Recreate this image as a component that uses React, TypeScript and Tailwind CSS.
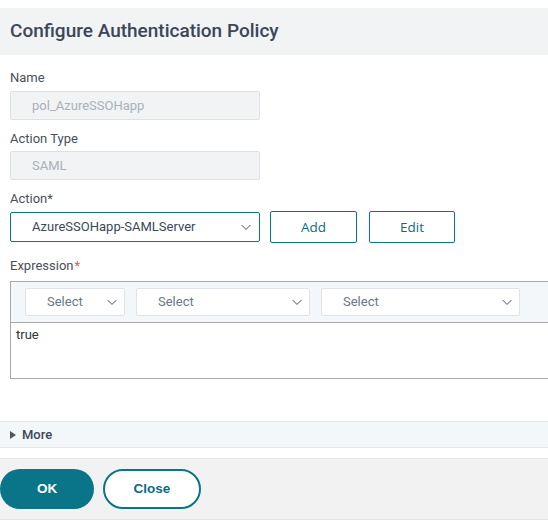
import React from 'react';

const Chevron = ({ className = '' }: { className?: string }) => (
  <svg viewBox="0 0 12 8" className={`h-[7px] w-[12px] ${className}`} fill="none" stroke="#3d4656" strokeWidth="1.1">
    <path d="M1 1.2 L6 6.2 L11 1.2" />
  </svg>
);

const Label = ({ text, req }: { text: string; req?: 'plain' | 'red' }) => (
  <div className="h-[13px] text-[13px] leading-[13px] text-[#4a4f57]">
    {text}
    {req === 'plain' && <span>*</span>}
    {req === 'red' && <span className="ml-[1px] text-[#e05a4f]">*</span>}
  </div>
);

const ExprSelect = ({ w }: { w: string }) => (
  <div className={`${w} flex h-[28px] items-center justify-between rounded-[2px] border border-[#dfe3e8] bg-white pl-[21px] pr-[6px]`}>
    <span className="text-[13px] text-[#6b7785]">Select</span>
    <Chevron />
  </div>
);

export default function App() {
  return (
    <div className="h-[522px] w-[548px] overflow-hidden bg-white" style={{ fontFamily: 'Roboto, "Noto Sans", sans-serif' }}>
      <div className="pt-[8px]">
        <div className="flex h-[47px] items-center bg-[#f2f3f5] pl-[10px]">
          <h1 className="text-[19px] font-medium text-[#3c4657]">Configure Authentication Policy</h1>
        </div>
      </div>

      <div className="pl-[10px] pt-[16px]">
        <Label text="Name" />
        <div className="mt-[7px] flex h-[29px] w-[250px] items-center rounded-[2px] border border-[#dde1e5] bg-[#f2f3f4] pl-[21px] text-[13px] text-[#a9b1ba]">
          pol_AzureSSOHapp
        </div>

        <div className="mt-[12px]">
          <Label text="Action Type" />
        </div>
        <div className="mt-[6px] flex h-[29px] w-[250px] items-center rounded-[2px] border border-[#dde1e5] bg-[#f2f3f4] pl-[21px] text-[13px] text-[#a9b1ba]">
          SAML
        </div>

        <div className="mt-[12px]">
          <Label text="Action" req="plain" />
        </div>
        <div className="mt-[6px] flex items-center">
          <div className="flex h-[30px] w-[250px] items-center justify-between rounded-[2px] border border-[#0b7386] pl-[21px] pr-[7px]">
            <span className="text-[13px] text-[#3c4657]">AzureSSOHapp-SAMLServer</span>
            <Chevron />
          </div>
          <button className="ml-[10px] h-[32px] w-[87px] rounded-[2px] border border-[#0b7386] text-[13.5px] text-[#0b6e80]" style={{ fontFamily: '"Open Sans", sans-serif' }}>
            Add
          </button>
          <button className="ml-[12px] h-[32px] w-[86px] rounded-[2px] border border-[#0b7386] text-[13.5px] text-[#0b6e80]" style={{ fontFamily: '"Open Sans", sans-serif' }}>
            Edit
          </button>
        </div>

        <div className="mt-[16px]">
          <Label text="Expression" req="red" />
        </div>
        <div className="mt-[9px] h-[98px] border-y border-l border-[#a7a9ac]">
          <div className="flex h-[41px] items-center gap-[11px] border-b border-[#a7a9ac] bg-[#f4f7f9] pl-[14px]">
            <ExprSelect w="w-[100px]" />
            <ExprSelect w="w-[174px]" />
            <ExprSelect w="w-[199px]" />
          </div>
          <div className="pl-[5px] pt-[2px] text-[13px] text-[#333]">true</div>
        </div>
      </div>

      <div className="mt-[42px] flex h-[27px] items-center border-y border-[#e3e6e9] bg-[#f4f7f9] pl-[10px]">
        <svg viewBox="0 0 6 8" className="h-[8px] w-[6px]" fill="#555">
          <path d="M0 0 L6 4 L0 8 Z" />
        </svg>
        <span className="ml-[6px] text-[13px] font-medium text-[#3c4657]">More</span>
      </div>

      <div className="mt-[10px] flex h-[62px] items-center gap-[9px] border-y border-[#e3e6e9] bg-[#f2f2f2]">
        <button className="h-[40px] w-[94px] rounded-[20px] bg-[#0a7488] text-[13.5px] font-bold text-white" style={{ fontFamily: '"Liberation Sans", sans-serif' }}>
          OK
        </button>
        <button className="h-[40px] w-[98px] rounded-[20px] border-2 border-[#0a7488] bg-white text-[13.5px] font-bold text-[#0a6c80]" style={{ fontFamily: '"Liberation Sans", sans-serif' }}>
          Close
        </button>
      </div>
    </div>
  );
}
